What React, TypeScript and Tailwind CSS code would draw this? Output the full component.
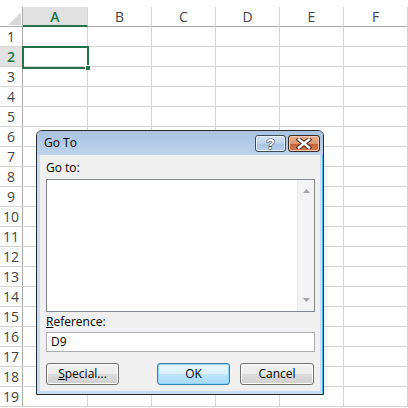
import React from "react";

const cols = ["A", "B", "C", "D", "E", "F"];
const rows = Array.from({ length: 19 }, (_, i) => i + 1);

function Btn({ children, primary, className = "" }: { children: React.ReactNode; primary?: boolean; className?: string }) {
  return (
    <div
      className={
        "h-[22px] rounded-[3px] border flex items-center justify-center text-[12px] text-[#000] " +
        (primary
          ? "border-[#3c7fb1] shadow-[inset_0_0_0_1px_#8fd3f5] bg-[linear-gradient(#eaf6fd_0%,#d9f0fc_50%,#bee6fd_50%,#a7d9f5_100%)] "
          : "border-[#707070] shadow-[inset_0_0_0_1px_#fcfcfc] bg-[linear-gradient(#f2f2f2_0%,#ebebeb_50%,#dddddd_50%,#cfcfcf_100%)] ") +
        className
      }
    >
      {children}
    </div>
  );
}

export default function App() {
  return (
    <div className="relative w-[408px] h-[408px] overflow-hidden bg-white font-['Open_Sans','Noto_Sans',sans-serif]">
      {/* Header row */}
      <div className="flex h-[27px] pt-[7px]">
        <div className="relative w-[23px] h-[20px] border-r border-[#ababab] border-b border-b-[#ababab]">
          <svg className="absolute left-[8px] top-[5px]" width="13" height="13" viewBox="0 0 13 13">
            <polygon points="13,0 13,13 0,13" fill="#dadada" />
          </svg>
        </div>
        {cols.map((c) => (
          <div
            key={c}
            className={
              "h-[20px] flex items-center justify-center text-[14px] border-r border-[#d4d4d4] " +
              (c === "A"
                ? "w-[65px] bg-[#e1e1e1] text-[#217346] font-semibold border-b-2 border-b-[#217346]"
                : "w-[64px] text-[#444] border-b border-b-[#ababab]")
            }
          >
            {c}
          </div>
        ))}
      </div>
      {/* Rows */}
      {rows.map((r) => (
        <div key={r} className="flex h-[20px]">
          <div
            className={
              "w-[23px] h-[20px] flex items-center justify-center text-[14px] border-r border-[#ababab] border-b border-b-[#d4d4d4] " +
              (r === 2 ? "bg-[#e1e1e1] text-[#217346] font-semibold" : "text-[#444]")
            }
          >
            {r}
          </div>
          {cols.map((c) => (
            <div
              key={c}
              className={"h-[20px] border-r border-b border-[#d4d4d4] " + (c === "A" ? "w-[65px]" : "w-[64px]")}
            />
          ))}
        </div>
      ))}

      {/* Selection */}
      <div className="absolute left-[22px] top-[46px] w-[67px] h-[23px] border-2 border-[#217346]" />
      <div className="absolute left-[85px] top-[65px] w-[6px] h-[6px] bg-[#217346] border border-white" />

      {/* Dialog */}
      <div className="absolute left-[36px] top-[130px] w-[288px] h-[265px] rounded-t-[6px] border border-[#2b2b2b] bg-[#c9dbee] flex flex-col shadow-[inset_-1px_0_0_#4cc3f0]">
        {/* Title bar */}
        <div className="h-[24px] flex items-center rounded-t-[5px] bg-[linear-gradient(#a8c3e1,#bdd3eb)] pl-[7px] pr-[3px]">
          <span className="text-[12px] text-[#000]">Go To</span>
          <div className="ml-auto flex gap-[2px] items-center mt-[1px]">
            <div className="w-[31px] h-[17px] rounded-[3px] border border-[#3c4a5c] bg-[linear-gradient(#d6e4f3_0%,#bcd2ec_50%,#a9c2e2_50%,#b8cfea_100%)] flex items-center justify-center shadow-[inset_0_0_0_1px_#e8f0fa]">
              <span className="text-[15px] font-bold text-white leading-none [-webkit-text-stroke:1px_#3a3a3a] [paint-order:stroke_fill] font-['Liberation_Sans',sans-serif]">?</span>
            </div>
            <div className="w-[32px] h-[17px] rounded-[3px] border border-[#3c2a24] bg-[linear-gradient(#e9b497_0%,#dd9570_50%,#c8603a_50%,#d27a52_100%)] flex items-center justify-center shadow-[inset_0_0_0_1px_#f1c7b0]">
              <svg width="16" height="11" viewBox="0 0 16 11">
                <path d="M3 1.5 L13 9.5 M13 1.5 L3 9.5" stroke="#3a2b26" strokeWidth="4.5" strokeLinecap="square" />
                <path d="M3 1.5 L13 9.5 M13 1.5 L3 9.5" stroke="#ffffff" strokeWidth="2.5" strokeLinecap="square" />
              </svg>
            </div>
          </div>
        </div>
        {/* Client */}
        <div className="flex-1 mx-[3px] mb-[3px] bg-[#f0f0f0] flex flex-col pl-[6px] pr-[5px] text-[12px] text-[#000]">
          <div className="h-[23px] flex items-center mt-[1px]">Go to:</div>
          <div className="h-[133px] border border-[#828790] bg-white flex justify-end">
            <div className="w-[17px] h-full bg-[#f3f3f3] border-l border-[#ececec] flex flex-col items-center justify-between py-[9px]">
              <svg width="7" height="4" viewBox="0 0 7 4"><polygon points="3.5,0 7,4 0,4" fill="#a3a3a3" /></svg>
              <svg width="7" height="4" viewBox="0 0 7 4"><polygon points="0,0 7,0 3.5,4" fill="#a3a3a3" /></svg>
            </div>
          </div>
          <div className="h-[20px] flex items-end pb-[1px]">
            <span><span className="underline">R</span>eference:</span>
          </div>
          <div className="h-[20px] border border-[#abadb3] bg-white flex items-center pl-[4px]">D9</div>
          <div className="flex mt-[11px]">
            <Btn className="w-[73px]">
              <span><span className="underline">S</span>pecial...</span>
            </Btn>
            <Btn primary className="w-[73px] ml-[38px]">OK</Btn>
            <Btn className="w-[74px] ml-[10px]">Cancel</Btn>
          </div>
        </div>
      </div>
    </div>
  );
}
